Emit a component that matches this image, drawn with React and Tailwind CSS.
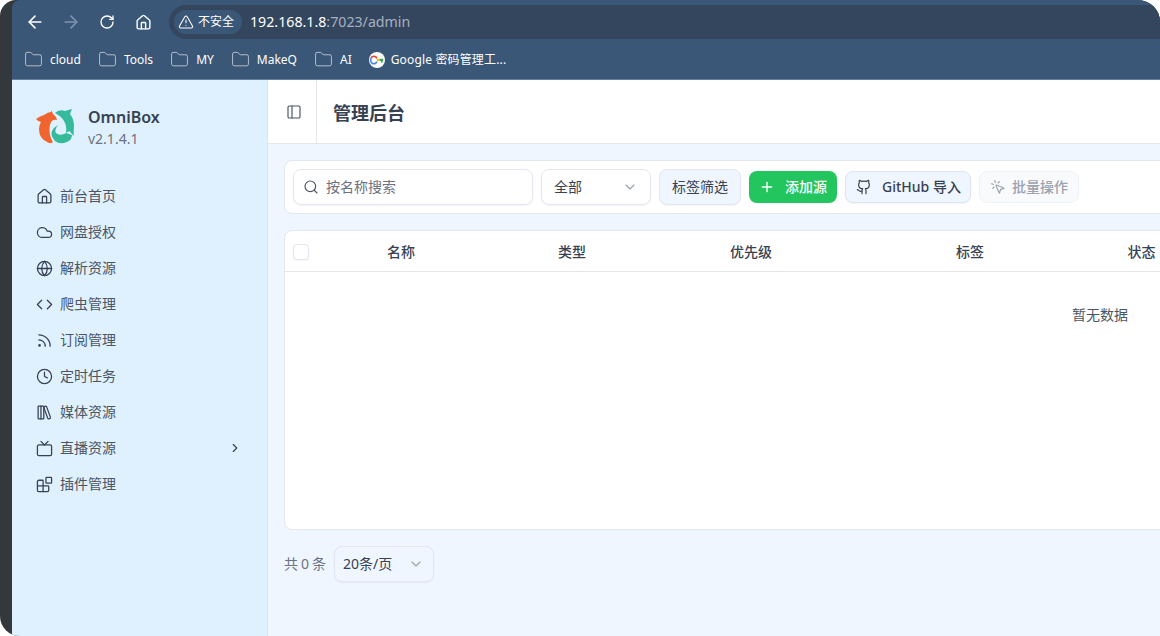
import React from 'react';
import {
  ArrowLeft, ArrowRight, RotateCw, House, TriangleAlert, Folder, Cloud, Globe, Code, Rss, Clock, LibraryBig, Tv,
  Blocks, ChevronRight, ChevronDown, PanelLeft, Search, Plus, Github, MousePointerClick,
} from 'lucide-react';

const cjk = { fontFamily: '"Noto Sans", "Noto Sans CJK SC", sans-serif' };

const bookmarks = ['cloud', 'Tools', 'MY', 'MakeQ', 'AI'];

const navItems = [
  { label: '前台首页', icon: House },
  { label: '网盘授权', icon: Cloud },
  { label: '解析资源', icon: Globe },
  { label: '爬虫管理', icon: Code },
  { label: '订阅管理', icon: Rss },
  { label: '定时任务', icon: Clock },
  { label: '媒体资源', icon: LibraryBig },
  { label: '直播资源', icon: Tv, more: true },
  { label: '插件管理', icon: Blocks },
];

const columns = [
  { label: '名称', width: 'w-[171px]' },
  { label: '类型', width: 'w-[172px]' },
  { label: '优先级', width: 'w-[226px]' },
  { label: '标签', width: 'w-[171.5px]' },
  { label: '状态', width: 'w-[172px]' },
];

const Logo = () => (
  <svg width="38" height="35" viewBox="0 0 38 35" className="shrink-0 mt-[2px]">
    <path d="M0 10 Q4 7 8 6 Q12 3 15 3 L15.5 1.5 L17 5 Q20 7 21 11 Q17 10 15 13 Q13 17 13.5 22 Q14 29 17 33 Q15 35 12 33.5 Q3 30 3 20 Q3 16 5 13 Q2 12.5 0 10Z" fill="#f0642f" />
    <path d="M19 4 Q23 0 29 2 L36 0 L34 5 Q38 10 38 17 L37.5 27 L33.5 22 L30 24 Q31 17 28 12 Q25 7 19 4Z" fill="#35bb9c" />
    <path d="M22 16 Q18 21 20 24 Q23 27 28 25 Q30 24 30 24 L36 26 Q36 31 31 33 Q24 36 19 32 Q14 27 16 22 Q18 18 22 16Z" fill="#35bb9c" />
  </svg>
);

const NavItem = ({ label, icon: Icon, more }) => (
  <div className="h-9 flex items-center pl-6 pr-6 text-[#4b5563]">
    <Icon size={17} strokeWidth={1.8} className="text-[#374151] shrink-0" />
    <span className="ml-[7px] text-sm flex-1">{label}</span>
    {more && <ChevronRight size={14} strokeWidth={2} className="text-[#374151] mr-[1px]" />}
  </div>
);

export default function App() {
  return (
    <div className="w-[1160px] h-[636px] bg-white" style={cjk}>
      <div className="h-full flex overflow-hidden bg-[#33383d] rounded-tl-[16px] rounded-tr-[22px] rounded-bl-[20px]">
        <div className="w-3 shrink-0" />
        <div className="flex-1 min-w-0 flex flex-col rounded-tl-[8px] overflow-hidden">
          {/* browser chrome */}
          <div className="h-20 shrink-0 bg-[#3b5778] border-b border-[#64809e] flex flex-col">
            <div className="h-[39px] pt-[5px] flex items-stretch">
              <div className="w-[157px] shrink-0 flex items-center pl-[5px]">
                <div className="w-9 flex justify-center"><ArrowLeft size={20} strokeWidth={1.9} className="text-white" /></div>
                <div className="w-9 flex justify-center"><ArrowRight size={20} strokeWidth={1.9} className="text-[#8094ad]" /></div>
                <div className="w-9 flex justify-center"><RotateCw size={16} strokeWidth={2} className="text-white" /></div>
                <div className="w-9 flex justify-center"><House size={17} strokeWidth={2} className="text-white" /></div>
              </div>
              <div className="flex-1 bg-[#33465e] rounded-l-full flex items-center pl-[5px]">
                <div className="h-6 w-[68px] bg-[#3b5778] rounded-full flex items-center pl-1 gap-[4px] text-white text-xs">
                  <TriangleAlert size={16} strokeWidth={1.6} />
                  <span>不安全</span>
                </div>
                <div className="ml-2 text-[14.2px] text-white">
                  192.168.1.8<span className="text-[#a5b1c0]">:7023/admin</span>
                </div>
              </div>
            </div>
            <div className="flex-1 flex items-center pl-3 pt-[1px] text-xs text-white">
              {bookmarks.map((name) => (
                <div key={name} className="flex items-center gap-[7px] mr-[17px]">
                  <Folder size={19} strokeWidth={1.1} className="text-[#c4ccd6]" />
                  <span>{name}</span>
                </div>
              ))}
              <div className="flex items-center gap-[6px]">
                <svg width="16" height="16" viewBox="0 0 16 16">
                  <circle cx="8" cy="8" r="8" fill="#fff" />
                  <path d="M2 6.5 A3 3 0 0 1 7.8 6.5" fill="none" stroke="#ea4335" strokeWidth="1.6" />
                  <path d="M2 6.5 A3 3 0 0 0 2 9.5" fill="none" stroke="#4285f4" strokeWidth="1.6" />
                  <path d="M2 9.5 A3 3 0 0 0 7.8 9.5" fill="none" stroke="#4285f4" strokeWidth="1.6" />
                  <rect x="7.8" y="6.8" width="3" height="2.2" fill="#fbbc05" />
                  <rect x="10.8" y="6.8" width="3.4" height="2.2" fill="#34a853" />
                  <rect x="12" y="9" width="1.6" height="1.6" fill="#34a853" />
                </svg>
                <span className="tracking-[0.15px]">Google 密码管理工...</span>
              </div>
            </div>
          </div>

          <div className="flex-1 min-h-0 flex">
            {/* sidebar */}
            <aside className="w-[256px] shrink-0 bg-[#dff1fe] border-r border-[#d5e5f2]">
              <div className="h-[98px] pt-[27px] pl-6 flex items-start gap-[14px]">
                <Logo />
                <div className="flex flex-col">
                  <span className="text-base font-semibold leading-[20px] text-[#374151]">OmniBox</span>
                  <span className="text-sm leading-[20px] mt-[2px] text-[#6b7280]">v2.1.4.1</span>
                </div>
              </div>
              {navItems.map((item) => (
                <NavItem key={item.label} {...item} />
              ))}
            </aside>

            {/* main */}
            <main className="flex-1 min-w-0 overflow-hidden bg-[#eff6ff] flex flex-col">
              <header className="h-16 shrink-0 bg-white border-b border-[#e5e7eb] flex items-stretch">
                <div className="w-[49px] shrink-0 border-r border-[#e5e7eb] flex items-center pl-[18px]">
                  <PanelLeft size={16} strokeWidth={1.75} className="text-[#4b5563]" />
                </div>
                <h1 className="ml-4 pt-[2px] self-center text-lg font-semibold text-[#374151]">管理后台</h1>
              </header>

              <div className="pt-4 pl-4 w-[1648px]">
                <div className="h-[54px] bg-white border border-[#e3e8f0] rounded-lg flex items-center pl-2 gap-2">
                  <div className="w-[240px] h-9 bg-white border border-[#e3e8f0] rounded-lg shadow-xs flex items-center pl-[9px] gap-[7px]">
                    <Search size={16} strokeWidth={1.75} className="text-[#4b5563]" />
                    <span className="text-sm text-[#6b7280]">按名称搜索</span>
                  </div>
                  <div className="w-[110px] h-9 bg-white border border-[#e3e8f0] rounded-lg shadow-xs flex items-center justify-between pl-3 pr-[12px]">
                    <span className="text-sm text-[#374151]">全部</span>
                    <ChevronDown size={16} strokeWidth={1.75} className="text-[#9ca3af]" />
                  </div>
                  <div className="w-[82px] h-9 bg-[#eff6ff] border border-[#e3e8f0] rounded-lg shadow-xs flex items-center justify-center text-sm text-[#374151]">
                    标签筛选
                  </div>
                  <div className="w-[88px] h-8 bg-[#22c55e] rounded-lg flex items-center pl-[10px] text-white text-sm font-medium">
                    <Plus size={16} strokeWidth={2} />
                    <span className="ml-[10px]">添加源</span>
                  </div>
                  <div className="w-[126px] h-8 bg-[#eff6ff] border border-[#dfe6ef] rounded-lg shadow-xs flex items-center pl-[10px] text-sm font-medium text-[#374151]">
                    <Github size={16} strokeWidth={1.75} />
                    <span className="ml-[10px]">GitHub 导入</span>
                  </div>
                  <div className="w-[100px] h-8 bg-[#f8fafc] border border-[#eef1f6] rounded-lg flex items-center pl-[10px] text-sm font-medium text-[#9ca3af]">
                    <MousePointerClick size={16} strokeWidth={1.75} />
                    <span className="ml-[6px]">批量操作</span>
                  </div>
                </div>

                <div className="mt-4 h-[300px] bg-white border border-[#e3e8f0] rounded-lg">
                  <div className="h-[41px] border-b border-[#e5e7eb] flex items-center pl-2 pt-[1px] text-sm font-medium text-[#374151]">
                    <div className="w-[94px] shrink-0">
                      <div className="w-4 h-4 border border-[#e3e8f0] rounded-[4px] bg-white shadow-xs" />
                    </div>
                    {columns.map((col) => (
                      <div key={col.label} className={`${col.width} shrink-0`}>{col.label}</div>
                    ))}
                  </div>
                  <div className="pt-[33px] text-center text-sm text-[#4b5563]">暂无数据</div>
                </div>

                <div className="mt-4 flex items-center gap-[8px]">
                  <span className="w-[42px] whitespace-nowrap text-sm text-[#6b7280] tracking-[-0.3px]">共 0 条</span>
                  <div className="w-[100px] h-9 bg-[#eff6ff] border border-[#e3e8f0] rounded-lg shadow-xs flex items-center justify-between pl-2 pr-[9px]">
                    <span className="text-sm text-[#374151]">20条/页</span>
                    <ChevronDown size={16} strokeWidth={1.75} className="text-[#9ca3af]" />
                  </div>
                </div>
              </div>
            </main>
          </div>
        </div>
      </div>
    </div>
  );
}
